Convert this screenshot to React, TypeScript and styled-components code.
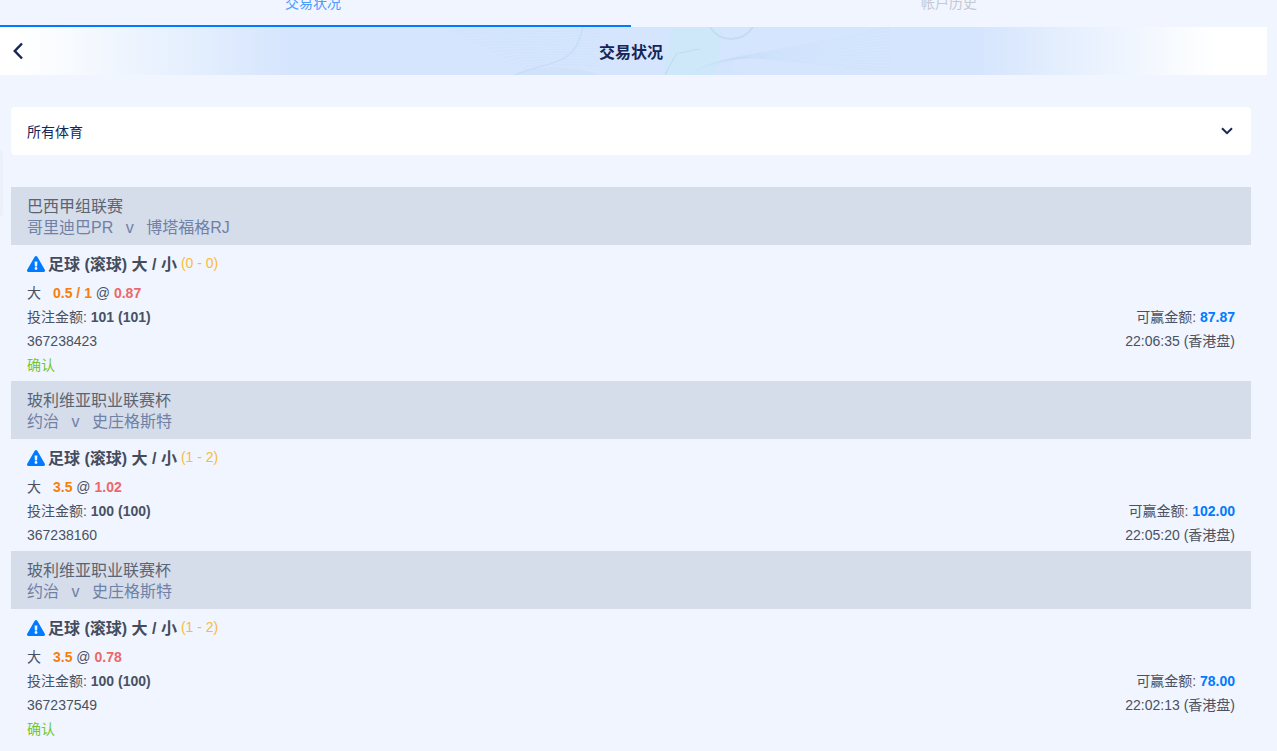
import { createGlobalStyle, styled } from "styled-components";
import { FaExclamationTriangle } from "react-icons/fa";

type Bet = {
  league: string;
  home: string;
  away: string;
  score: string;
  line: string;
  odds: string;
  stake: string;
  win: string;
  id: string;
  time: string;
  confirmed: boolean;
};

const bets: Bet[] = [
  {
    league: "巴西甲组联赛",
    home: "哥里迪巴PR",
    away: "博塔福格RJ",
    score: "(0 - 0)",
    line: "0.5 / 1",
    odds: "0.87",
    stake: "101 (101)",
    win: "87.87",
    id: "367238423",
    time: "22:06:35",
    confirmed: true,
  },
  {
    league: "玻利维亚职业联赛杯",
    home: "约治",
    away: "史庄格斯特",
    score: "(1 - 2)",
    line: "3.5",
    odds: "1.02",
    stake: "100 (100)",
    win: "102.00",
    id: "367238160",
    time: "22:05:20",
    confirmed: false,
  },
  {
    league: "玻利维亚职业联赛杯",
    home: "约治",
    away: "史庄格斯特",
    score: "(1 - 2)",
    line: "3.5",
    odds: "0.78",
    stake: "100 (100)",
    win: "78.00",
    id: "367237549",
    time: "22:02:13",
    confirmed: true,
  },
];

// fine line families of the header's banknote pattern
const fineLines = Array.from({ length: 14 }, (_, i) => i);

const App = () => {
  return (
    <>
      <GlobalStyle />
      <Page>
        <EdgeShade />
        <Tabs>
          <Tab $active>交易状况</Tab>
          <Tab>帐户历史</Tab>
        </Tabs>
        <Header>
          <Guilloche viewBox="0 0 480 48" aria-hidden="true">
            <path d="M222 0H272L266 48H214Z" fill="#c9ebf6" opacity="0.5" />
            <path d="M65 48C95 34 125 42 133 0" fill="none" stroke="#c2daf3" strokeWidth="1.4" opacity="0.7" />
            <path d="M65 48C95 36 125 40 150 48Z" fill="#c6dff5" opacity="0.4" />
            <path d="M260 0C270 16 292 16 303 0" fill="none" stroke="#bfd8f0" strokeWidth="1.800" opacity="0.8" />
            <path d="M227 26C222 34 218 42 215 48M227 26C236 26 244 22 250 22" fill="none" stroke="#bfdbee" strokeWidth="1.100" />
            {fineLines.map((i) => (
              <path
                key={i}
                d={`M${i * 6} ${4 + i * 3}C60 ${i * 3} 100 ${10 + i * 2} 150 ${i * 3}`}
                fill="none"
                stroke="#c4dcf6"
                strokeWidth="0.5"
                opacity="0.5"
              />
            ))}
            {fineLines.map((i) => (
              <path
                key={i}
                d={`M${240 + i * 4} 48C250 ${30 - i} 340 ${24 + i} 440 ${i * 3.4}`}
                fill="none"
                stroke="#c4dcf6"
                strokeWidth="0.5"
                opacity="0.5"
              />
            ))}
          </Guilloche>
          <BackButton aria-label="返回">
            <svg width="12" height="18" viewBox="0 0 12 18">
              <path d="M10 1.500 2.800 9l7.200 7.500" fill="none" stroke="#152659" strokeWidth="2.500" />
            </svg>
          </BackButton>
          <Title>交易状况</Title>
        </Header>
        <Select>
          <span>所有体育</span>
          <svg width="12" height="8" viewBox="0 0 12 8">
            <path d="M1 1.300 6 6.200l5-4.900" fill="none" stroke="#152659" strokeWidth="2" />
          </svg>
        </Select>
        <List>
          {bets.map((bet) => (
            <li key={bet.id}>
              <LeagueBar>
                <League>{bet.league}</League>
                <Teams>
                  <span>{bet.home}</span>
                  <Versus>v</Versus>
                  <span>{bet.away}</span>
                </Teams>
              </LeagueBar>
              <Body>
                <Market>
                  <FaExclamationTriangle size={18} color="#007bff" />
                  <strong>足球 (滚球) 大 / 小</strong>
                  <Score>{bet.score}</Score>
                </Market>
                <Row>
                  <span>
                    大<Line>{bet.line}</Line> @ <Odds>{bet.odds}</Odds>
                  </span>
                </Row>
                <Row>
                  <span>
                    投注金额: <b>{bet.stake}</b>
                  </span>
                  <span>
                    可赢金额: <Win>{bet.win}</Win>
                  </span>
                </Row>
                <Row>
                  <span>{bet.id}</span>
                  <span>{bet.time} (香港盘)</span>
                </Row>
                {bet.confirmed && (
                  <Row>
                    <Status>确认</Status>
                  </Row>
                )}
              </Body>
            </li>
          ))}
        </List>
      </Page>
    </>
  );
};

export default App;

const GlobalStyle = createGlobalStyle`
  html, body {
    margin: 0;
    height: 100%;
    overflow: hidden;
    background: #f0f5ff;
    font-family: "Liberation Sans", "Noto Sans CJK SC", sans-serif;
  }
`;

const Page = styled.div`
  position: relative;
  width: 1267px;
  height: 751px;
  overflow: hidden;
`;

const EdgeShade = styled.div`
  position: absolute;
  left: -6px;
  top: 150px;
  width: 9px;
  height: 66px;
  border-radius: 4px;
  background: #ebf0fb;
`;

const Tabs = styled.div`
  display: flex;
  height: 27px;
`;

const Tab = styled.div<{ $active?: boolean }>`
  flex: ${({ $active }) => ($active ? "0 0 631px" : "1")};
  height: 31px;
  margin-top: -4px;
  padding-right: ${({ $active }) => ($active ? "5px" : "0")};
  box-sizing: border-box;
  text-align: center;
  font-size: 14px;
  line-height: 14px;
  color: ${({ $active }) => ($active ? "#4d9bff" : "#c5c9d2")};
  border-bottom: 2px solid ${({ $active }) => ($active ? "#007bff" : "transparent")};
`;

const Header = styled.div`
  position: relative;
  height: 48px;
  padding-right: 5px;
  display: flex;
  align-items: center;
  justify-content: center;
  overflow: hidden;
  background: linear-gradient(
    90deg,
    #ffffff 1.5%,
    #d5e5fd 23%,
    #d5e5fd 77%,
    #ffffff 96%
  );
`;

const Guilloche = styled.svg`
  position: absolute;
  left: 450px;
  top: 0;
  width: 480px;
  height: 48px;
`;

const BackButton = styled.button`
  position: absolute;
  left: 12px;
  top: 15px;
  padding: 0;
  border: 0;
  background: none;
  display: flex;
`;

const Title = styled.h1`
  position: relative;
  margin: 0;
  font-size: 16px;
  font-weight: 700;
  color: #152659;
`;

const Select = styled.div`
  margin: 32px 16px 32px 11px;
  height: 48px;
  padding: 0 18px 0 16px;
  display: flex;
  align-items: center;
  justify-content: space-between;
  box-sizing: border-box;
  background: #fff;
  border-radius: 4px;
  font-size: 14px;
  color: #152659;
`;

const List = styled.ul`
  list-style: none;
  margin: 0 16px 0 11px;
  padding: 0;
`;

const LeagueBar = styled.div`
  height: 58px;
  box-sizing: border-box;
  padding: 9px 16px 0;
  background: #d5dcea;
  font-size: 16px;
  line-height: 21px;
`;

const League = styled.div`
  color: #5b6472;
`;

const Teams = styled.div`
  color: #6f81a6;
  display: flex;
`;

const Versus = styled.span`
  margin: 0 12.5px;
`;

const Body = styled.div`
  padding: 0 16px 4px;
  color: #4a5160;
  font-size: 14px;
`;

const Market = styled.div`
  height: 36px;
  display: flex;
  align-items: center;
  gap: 4px;
  font-size: 16px;
  color: #444c5c;

  svg {
    margin: 1px -1px 0 0;
  }

  strong {
    font-weight: 700;
  }
`;

const Score = styled.span`
  font-size: 14px;
  color: #f8bb3c;
`;

const Row = styled.div`
  height: 24px;
  display: flex;
  align-items: flex-end;
  justify-content: space-between;
  line-height: 24px;

  b {
    font-weight: 700;
  }
`;

const Line = styled.b`
  margin-left: 12px;
  color: #f77f0c;
`;

const Odds = styled.b`
  color: #ec6868;
`;

const Win = styled.b`
  color: #007bff;
`;

const Status = styled.span`
  color: #74c62c;
`;
